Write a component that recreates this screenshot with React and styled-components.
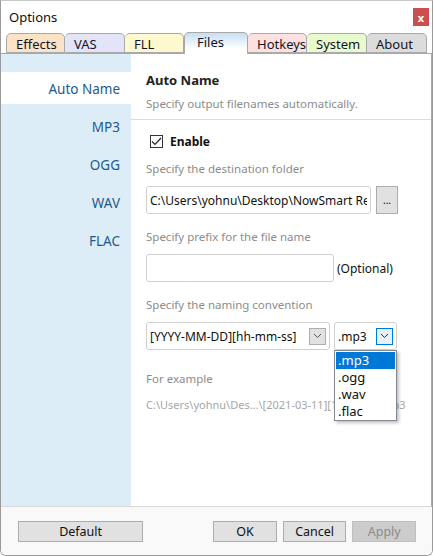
import React, { useState } from "react";
import styled, { createGlobalStyle } from "styled-components";

const GlobalStyle = createGlobalStyle`
  html, body {
    margin: 0;
    padding: 0;
    background: #ffffff;
  }
  body {
    font-family: "Noto Sans", "Open Sans", sans-serif;
    font-size: 12px;
    color: #000;
  }
`;

const tabs = [
  { name: "Effects", color: "#fde3c6", width: 59 },
  { name: "VAS", color: "#e4e4f8", width: 60 },
  { name: "FLL", color: "#fdf8cd", width: 59 },
  { name: "Files", color: "#ffffff", width: 64, active: true },
  { name: "Hotkeys", color: "#fde1e0", width: 59 },
  { name: "System", color: "#e9fbcd", width: 60 },
  { name: "About", color: "#dcdcdc", width: 60 },
];

const sections = ["Auto Name", "MP3", "OGG", "WAV", "FLAC"];
const formats = [".mp3", ".ogg", ".wav", ".flac"];

const Window = styled.div`
  width: 433px;
  height: 556px;
  box-sizing: border-box;
  border: 1px solid #9a9a9a;
  border-top-color: #c8c8c8;
  border-radius: 0 0 6px 6px;
  display: flex;
  flex-direction: column;
  overflow: hidden;
  background: #ffffff;
`;

const TitleBar = styled.div`
  height: 31px;
  display: flex;
  align-items: center;
  justify-content: space-between;
  padding: 0 3px 0 8px;
  font-size: 13px;
  color: #111;
`;

const CloseButton = styled.div`
  width: 16px;
  height: 18px;
  margin-top: 1px;
  background: #c9504f;
  color: #fff;
  font-size: 11px;
  font-weight: bold;
  display: flex;
  align-items: center;
  justify-content: center;
  line-height: 1;
`;

const TabRow = styled.div`
  height: 21px;
  display: flex;
  align-items: flex-end;
  padding-left: 5px;
  position: relative;
  z-index: 1;
`;

const Tab = styled.div`
  width: ${(p) => p.$width}px;
  height: ${(p) => (p.$active ? 22 : 20)}px;
  box-sizing: border-box;
  margin-bottom: ${(p) => (p.$active ? -1 : 0)}px;
  border: 1px solid #a9a9a9;
  border-bottom: ${(p) => (p.$active ? "none" : "1px solid #a9a9a9")};
  border-left-width: ${(p) => (p.$first || p.$active ? 1 : 0)}px;
  border-radius: 5px 5px 0 0;
  background: ${(p) =>
    p.$active ? "linear-gradient(#c6def4, #ffffff 75%)" : p.$color};
  font-size: 13px;
  color: #141428;
  padding-top: ${(p) => (p.$active ? 1 : 2)}px;
  padding-left: ${(p) => (p.$active ? 12 : 9)}px;
  display: flex;
  align-items: ${(p) => (p.$active ? "flex-start" : "center")};
  line-height: 17px;
`;

const Page = styled.div`
  flex: 1;
  display: flex;
  border-top: 1px solid #a9a9a9;
  border-right: 1px solid #a9a9a9;
  border-bottom: 1px solid #d9d9d9;
  min-height: 0;
`;

const Sidebar = styled.div`
  width: 130px;
  background: #dcedf7;
  padding-top: 18px;
  display: flex;
  flex-direction: column;
`;

const SideItem = styled.div`
  height: 32px;
  box-sizing: border-box;
  margin-bottom: 6px;
  display: flex;
  align-items: center;
  justify-content: flex-end;
  padding-right: 11px;
  padding-top: 1px;
  font-size: 13.5px;
  color: #1d5a8e;
  background: ${(p) => (p.$active ? "#ffffff" : "transparent")};
  cursor: pointer;
`;

const Panel = styled.div`
  flex: 1;
  position: relative;
  background: #ffffff;
  display: flex;
  flex-direction: column;
`;

const PanelHead = styled.div`
  padding: 17px 15px 7px;
  border-bottom: 1px solid #dcdcdc;
`;

const Heading = styled.div`
  font-size: 13px;
  font-weight: bold;
  color: #222;
  line-height: 18px;
`;

const Hint = styled.div`
  color: #8c8c8c;
  margin-top: 6px;
  line-height: 17px;
  font-size: 11.5px;
`;

const PanelBody = styled.div`
  padding: 12px 15px 0;
  display: flex;
  flex-direction: column;
`;

const CheckRow = styled.label`
  display: flex;
  align-items: center;
  gap: 7px;
  padding-left: 4px;
  font-weight: bold;
  font-size: 12px;
  color: #111;
  height: 18px;
`;

const Box = styled.span`
  width: 13px;
  height: 13px;
  box-sizing: border-box;
  border: 1px solid #333;
  background: #fff;
  display: flex;
  align-items: center;
  justify-content: center;
`;

const Label = styled.div`
  color: #8c8c8c;
  font-size: 11.5px;
  line-height: 18px;
  margin-top: ${(p) => p.$top || 12}px;
  margin-bottom: 8px;
`;

const Row = styled.div`
  display: flex;
  align-items: center;
  gap: ${(p) => p.$gap || 4}px;
`;

const Field = styled.div`
  width: ${(p) => p.$width}px;
  height: 28px;
  box-sizing: border-box;
  border: 1px solid #cfcfcf;
  border-radius: 3px;
  background: #fff;
  display: flex;
  align-items: center;
  padding: 0 3px;
  font-size: 12px;
  color: #111;
  white-space: nowrap;
  overflow: hidden;
`;

const FieldText = styled.span`
  flex: 1;
  overflow: hidden;
  white-space: nowrap;
`;

const SmallButton = styled.div`
  width: 22px;
  height: 28px;
  box-sizing: border-box;
  border: 1px solid #adadad;
  background: #e1e1e1;
  display: flex;
  align-items: flex-end;
  justify-content: center;
  padding-bottom: 8px;
  font-size: 10px;
  line-height: 1;
`;

const Optional = styled.span`
  font-size: 12px;
  color: #111;
`;

const DropArrow = styled.span`
  width: 17px;
  height: 17px;
  box-sizing: border-box;
  border: 1px solid ${(p) => (p.$focus ? "#0078d7" : "#adadad")};
  background: ${(p) => (p.$focus ? "#e5f1fb" : "#e1e1e1")};
  display: flex;
  align-items: center;
  justify-content: center;
  margin-left: 2px;
`;

const ComboWrap = styled.div`
  position: relative;
`;

const ListBox = styled.div`
  position: absolute;
  top: 28px;
  left: 0;
  width: 63px;
  box-sizing: border-box;
  border: 1px solid #828790;
  background: #fff;
  box-shadow: 2px 2px 3px rgba(0, 0, 0, 0.25);
  padding: 1px 1px 0;
  z-index: 5;
`;

const Option = styled.div`
  height: 17px;
  line-height: 16px;
  padding-left: 2px;
  font-size: 13px;
  background: ${(p) => (p.$active ? "#0078d7" : "transparent")};
  color: ${(p) => (p.$active ? "#fff" : "#111")};
`;

const Example = styled.div`
  color: #a6a6a6;
  font-size: 11px;
  line-height: 16px;
  margin-top: 1px;
  white-space: nowrap;
`;

const Footer = styled.div`
  height: 48px;
  background: #f9f9f9;
  display: flex;
  align-items: center;
  padding: 0 16px 0 17px;
  gap: 6px;
`;

const Button = styled.div`
  width: ${(p) => p.$width || 64}px;
  height: 21px;
  box-sizing: border-box;
  border: 1px solid ${(p) => (p.$disabled ? "#bfbfbf" : "#adadad")};
  background: ${(p) => (p.$disabled ? "#cccccc" : "#e1e1e1")};
  color: ${(p) => (p.$disabled ? "#8a8a8a" : "#111")};
  display: flex;
  align-items: center;
  justify-content: center;
  font-size: 12.5px;
  margin-left: ${(p) => p.$push || 0}px;
`;

const Chevron = ({ color = "#555" }) => (
  <svg width="9" height="6" viewBox="0 0 9 6">
    <path d="M1 1 L4.5 4.5 L8 1" fill="none" stroke={color} strokeWidth="1" />
  </svg>
);

const Check = () => (
  <svg width="11" height="9" viewBox="0 0 11 9">
    <path d="M1 4.5 L4 7.5 L10 1" fill="none" stroke="#222" strokeWidth="1.2" />
  </svg>
);

export default function App() {
  const [tab] = useState("Files");
  const [section, setSection] = useState("Auto Name");

  return (
    <>
      <GlobalStyle />
      <Window>
        <TitleBar>
          <span>Options</span>
          <CloseButton>x</CloseButton>
        </TitleBar>
        <TabRow>
          {tabs.map((t, i) => (
            <Tab
              key={t.name}
              $width={t.width}
              $color={t.color}
              $active={t.name === tab}
              $first={i === 0}
            >
              {t.name}
            </Tab>
          ))}
        </TabRow>
        <Page>
          <Sidebar>
            {sections.map((s) => (
              <SideItem key={s} $active={s === section} onClick={() => setSection(s)}>
                {s}
              </SideItem>
            ))}
          </Sidebar>
          <Panel>
            <PanelHead>
              <Heading>Auto Name</Heading>
              <Hint>Specify output filenames automatically.</Hint>
            </PanelHead>
            <PanelBody>
              <CheckRow>
                <Box>
                  <Check />
                </Box>
                Enable
              </CheckRow>
              <Label $top={10}>Specify the destination folder</Label>
              <Row $gap={5}>
                <Field $width={225}>
                  <FieldText>C:\Users\yohnu\Desktop\NowSmart Recorder</FieldText>
                </Field>
                <SmallButton>...</SmallButton>
              </Row>
              <Label $top={14}>Specify prefix for the file name</Label>
              <Row $gap={3}>
                <Field $width={188} />
                <Optional>(Optional)</Optional>
              </Row>
              <Label $top={14}>Specify the naming convention</Label>
              <Row $gap={4}>
                <Field $width={184}>
                  <FieldText>[YYYY-MM-DD][hh-mm-ss]</FieldText>
                  <DropArrow>
                    <Chevron />
                  </DropArrow>
                </Field>
                <ComboWrap>
                  <Field $width={63}>
                    <FieldText>.mp3</FieldText>
                    <DropArrow $focus>
                      <Chevron color="#333" />
                    </DropArrow>
                  </Field>
                  <ListBox>
                    {formats.map((f, i) => (
                      <Option key={f} $active={i === 0}>
                        {f}
                      </Option>
                    ))}
                  </ListBox>
                </ComboWrap>
              </Row>
              <Label $top={20}>For example</Label>
              <Example>C:\Users\yohnu\Des...\[2021-03-11][15-42-08].mp3</Example>
            </PanelBody>
          </Panel>
        </Page>
        <Footer>
          <Button $width={126}>Default</Button>
          <Button $push={64}>OK</Button>
          <Button>Cancel</Button>
          <Button $disabled>Apply</Button>
        </Footer>
      </Window>
    </>
  );
}
